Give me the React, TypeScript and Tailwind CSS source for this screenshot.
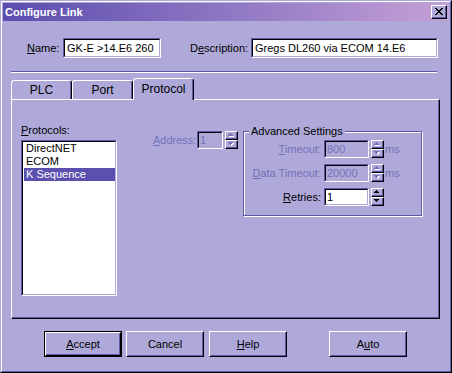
import React from 'react';

// pixel triangle for the spin buttons
function Arrow({ up, disabled }: { up?: boolean; disabled?: boolean }) {
  const rows = up ? [[2, 1], [1, 3], [0, 5]] : [[0, 5], [1, 3], [2, 1]];
  return (
    <svg width="6" height="4" viewBox="0 0 6 4" shapeRendering="crispEdges">
      {disabled &&
        rows.map(([x, w], i) => <rect key={'s' + i} x={x + 1} y={i + 1} width={w} height={1} fill="#ffffff" />)}
      {rows.map(([x, w], i) => (
        <rect key={i} x={x} y={i} width={w} height={1} fill={disabled ? '#7470b8' : '#000000'} />
      ))}
    </svg>
  );
}

function SpinHalf({ up, disabled }: { up?: boolean; disabled?: boolean }) {
  return (
    <div className="flex h-[9px] w-[13px] border border-t-white border-l-white border-r-black border-b-black bg-[#aea9d9]">
      <div className="flex flex-1 items-center justify-center border-r border-b border-[#5f58a8]">
        <Arrow up={up} disabled={disabled} />
      </div>
    </div>
  );
}

function Spinner({ disabled }: { disabled?: boolean }) {
  return (
    <div className="flex flex-col">
      <SpinHalf up disabled={disabled} />
      <SpinHalf disabled={disabled} />
    </div>
  );
}

function Field({ className, white, disabled, children }: { className: string; white?: boolean; disabled?: boolean; children?: React.ReactNode }) {
  return (
    <div className={`border border-t-[#5f58a8] border-l-[#5f58a8] border-r-white border-b-white ${className}`}>
      <div
        className={`flex h-full items-center overflow-hidden whitespace-nowrap border border-t-black border-l-black border-r-[#aea9d9] border-b-[#aea9d9] pl-[1px] ${
          white ? 'bg-white' : 'bg-[#aea9d9]'
        } ${disabled ? 'text-[#7470b8]' : 'text-black'}`}
      >
        {children}
      </div>
    </div>
  );
}

function Button({ label, def }: { label: React.ReactNode; def?: boolean }) {
  const inner = (
    <div className="flex h-full flex-1 flex-col border border-t-white border-l-white border-r-black border-b-black">
      <div className="flex flex-1 items-center justify-center border border-t-[#aea9d9] border-l-[#aea9d9] border-r-[#5f58a8] border-b-[#5f58a8]">
        {label}
      </div>
    </div>
  );
  if (def) {
    return <div className="flex h-[26px] w-[78px] border border-black">{inner}</div>;
  }
  return <div className="flex h-[26px] w-[78px]">{inner}</div>;
}

function Tab({ label, active }: { label: string; active?: boolean }) {
  return (
    <div
      className={`flex w-[61px] items-center justify-center rounded-t-[3px] border-t border-l border-r border-t-white border-l-white border-r-black bg-[#aea9d9] text-[12px] shadow-[inset_-1px_0_0_#5f58a8] ${
        active ? 'relative z-10 -mb-[1px] h-[22px] pb-[1px]' : 'h-[19px]'
      }`}
    >
      {label}
    </div>
  );
}

function GroupRow({ label, value, white, ms, className }: { label: React.ReactNode; value: string; white?: boolean; ms?: boolean; className?: string }) {
  return (
    <div className={`flex h-[18px] items-center ${className ?? ''}`}>
      <div className={`flex w-[80px] justify-end pr-[3px] ${white ? 'text-black' : 'text-[#7470b8]'}`}>{label}</div>
      <Field className="h-[18px] w-[45px]" white={white} disabled={!white}>
        {value}
      </Field>
      <div className="ml-[2px]">
        <Spinner disabled={!white} />
      </div>
      {ms && <span className="ml-[1px] text-[#7470b8]">ms</span>}
    </div>
  );
}

export default function App() {
  return (
    <div className="h-[373px] w-[452px] select-none border border-t-[#aea9d9] border-l-[#aea9d9] border-r-black border-b-black font-['Liberation_Sans',Arial,sans-serif] text-[11px] leading-[13px] text-black">
      <div className="flex h-full flex-col border border-t-white border-l-white border-r-[#5f58a8] border-b-[#5f58a8] bg-[#aea9d9] p-[1px]">
        {/* title bar */}
        <div className="flex h-[18px] items-center justify-between bg-gradient-to-r from-[#5c4cae] to-[#c6a0d6] px-[2px]">
          <span className="font-bold text-white">Configure Link</span>
          <div className="flex h-[14px] w-[16px] border border-t-white border-l-white border-r-black border-b-black bg-[#aea9d9]">
            <div className="flex flex-1 items-center justify-center border-r border-b border-[#5f58a8]">
              <svg width="8" height="7" viewBox="0 0 8 7" shapeRendering="crispEdges">
                <path d="M0 0h2v1h-2zM6 0h2v1h-2zM1 1h2v1h-2zM5 1h2v1h-2zM2 2h4v1h-4zM3 3h2v1h-2zM2 4h4v1h-4zM1 5h2v1h-2zM5 5h2v1h-2zM0 6h2v1h-2zM6 6h2v1h-2z" fill="#000" />
              </svg>
            </div>
          </div>
        </div>

        {/* name / description */}
        <div className="mt-[17px] flex h-[20px] items-center">
          <span className="ml-[24px] w-[36px]">
            <u>N</u>ame:
          </span>
          <Field className="h-[20px] w-[98px]" white>
            <span className="pl-[1px]">GK-E &gt;14.E6 260</span>
          </Field>
          <span className="ml-[29px] w-[61px]">
            D<u>e</u>scription:
          </span>
          <Field className="h-[20px] w-[187px]" white>
            <span className="pl-[1px]">Gregs DL260 via ECOM 14.E6</span>
          </Field>
        </div>

        <div className="mt-[13px] ml-[8px] h-[2px] w-[426px] border-t border-b border-t-[#5f58a8] border-b-white" />

        {/* tabs */}
        <div className="mt-[5px] ml-[8px] flex items-end">
          <Tab label="PLC" />
          <Tab label="Port" />
          <Tab label="Protocol" active />
        </div>

        <div className="ml-[8px] h-[220px] w-[429px] border border-t-white border-l-white border-r-black border-b-black">
          <div className="flex h-full items-start border-r border-b border-[#5f58a8]">
            {/* protocols list */}
            <div className="ml-[9px] mt-[24px] flex flex-col">
              <span>
                <u>P</u>rotocols:
              </span>
              <Field className="mt-[3px] h-[156px] w-[96px]" white>
                <div className="flex h-full w-full flex-col self-start">
                  <div className="h-[13px] pl-[2px]">DirectNET</div>
                  <div className="h-[13px] pl-[2px]">ECOM</div>
                  <div className="h-[13px] bg-[#5b4faf] pl-[2px] text-white">K Sequence</div>
                </div>
              </Field>
            </div>

            {/* address */}
            <div className="ml-[36px] mt-[31px] flex h-[18px] items-center">
              <span className="w-[44px] text-[#7470b8]">
                <u>A</u>ddress:
              </span>
              <Field className="h-[18px] w-[26px]" disabled>
                1
              </Field>
              <div className="ml-[2px]">
                <Spinner disabled />
              </div>
            </div>

            {/* advanced settings */}
            <div className="ml-[5px] mt-[31px] flex h-[85px] w-[179px] flex-col border border-[#5f58a8] shadow-[inset_1px_1px_0_#ffffff,1px_1px_0_#ffffff]">
              <span className="-mt-[7px] ml-[5px] w-fit bg-[#aea9d9] px-[2px]">Advanced Settings</span>
              <GroupRow
                className="mt-[2px]"
                label={
                  <span>
                    <u>T</u>imeout:
                  </span>
                }
                value="800"
                ms
              />
              <GroupRow
                className="mt-[6px]"
                label={
                  <span>
                    <u>D</u>ata Timeout:
                  </span>
                }
                value="20000"
                ms
              />
              <GroupRow
                className="mt-[6px]"
                label={
                  <span>
                    <u>R</u>etries:
                  </span>
                }
                value="1"
                white
              />
            </div>
          </div>
        </div>

        {/* buttons */}
        <div className="mt-[12px] flex">
          <div className="ml-[41px]">
            <Button
              def
              label={
                <span>
                  <u>A</u>ccept
                </span>
              }
            />
          </div>
          <div className="ml-[4px]">
            <Button label="Cancel" />
          </div>
          <div className="ml-[5px]">
            <Button
              label={
                <span>
                  <u>H</u>elp
                </span>
              }
            />
          </div>
          <div className="ml-[42px]">
            <Button
              label={
                <span>
                  A<u>u</u>to
                </span>
              }
            />
          </div>
        </div>
      </div>
    </div>
  );
}
